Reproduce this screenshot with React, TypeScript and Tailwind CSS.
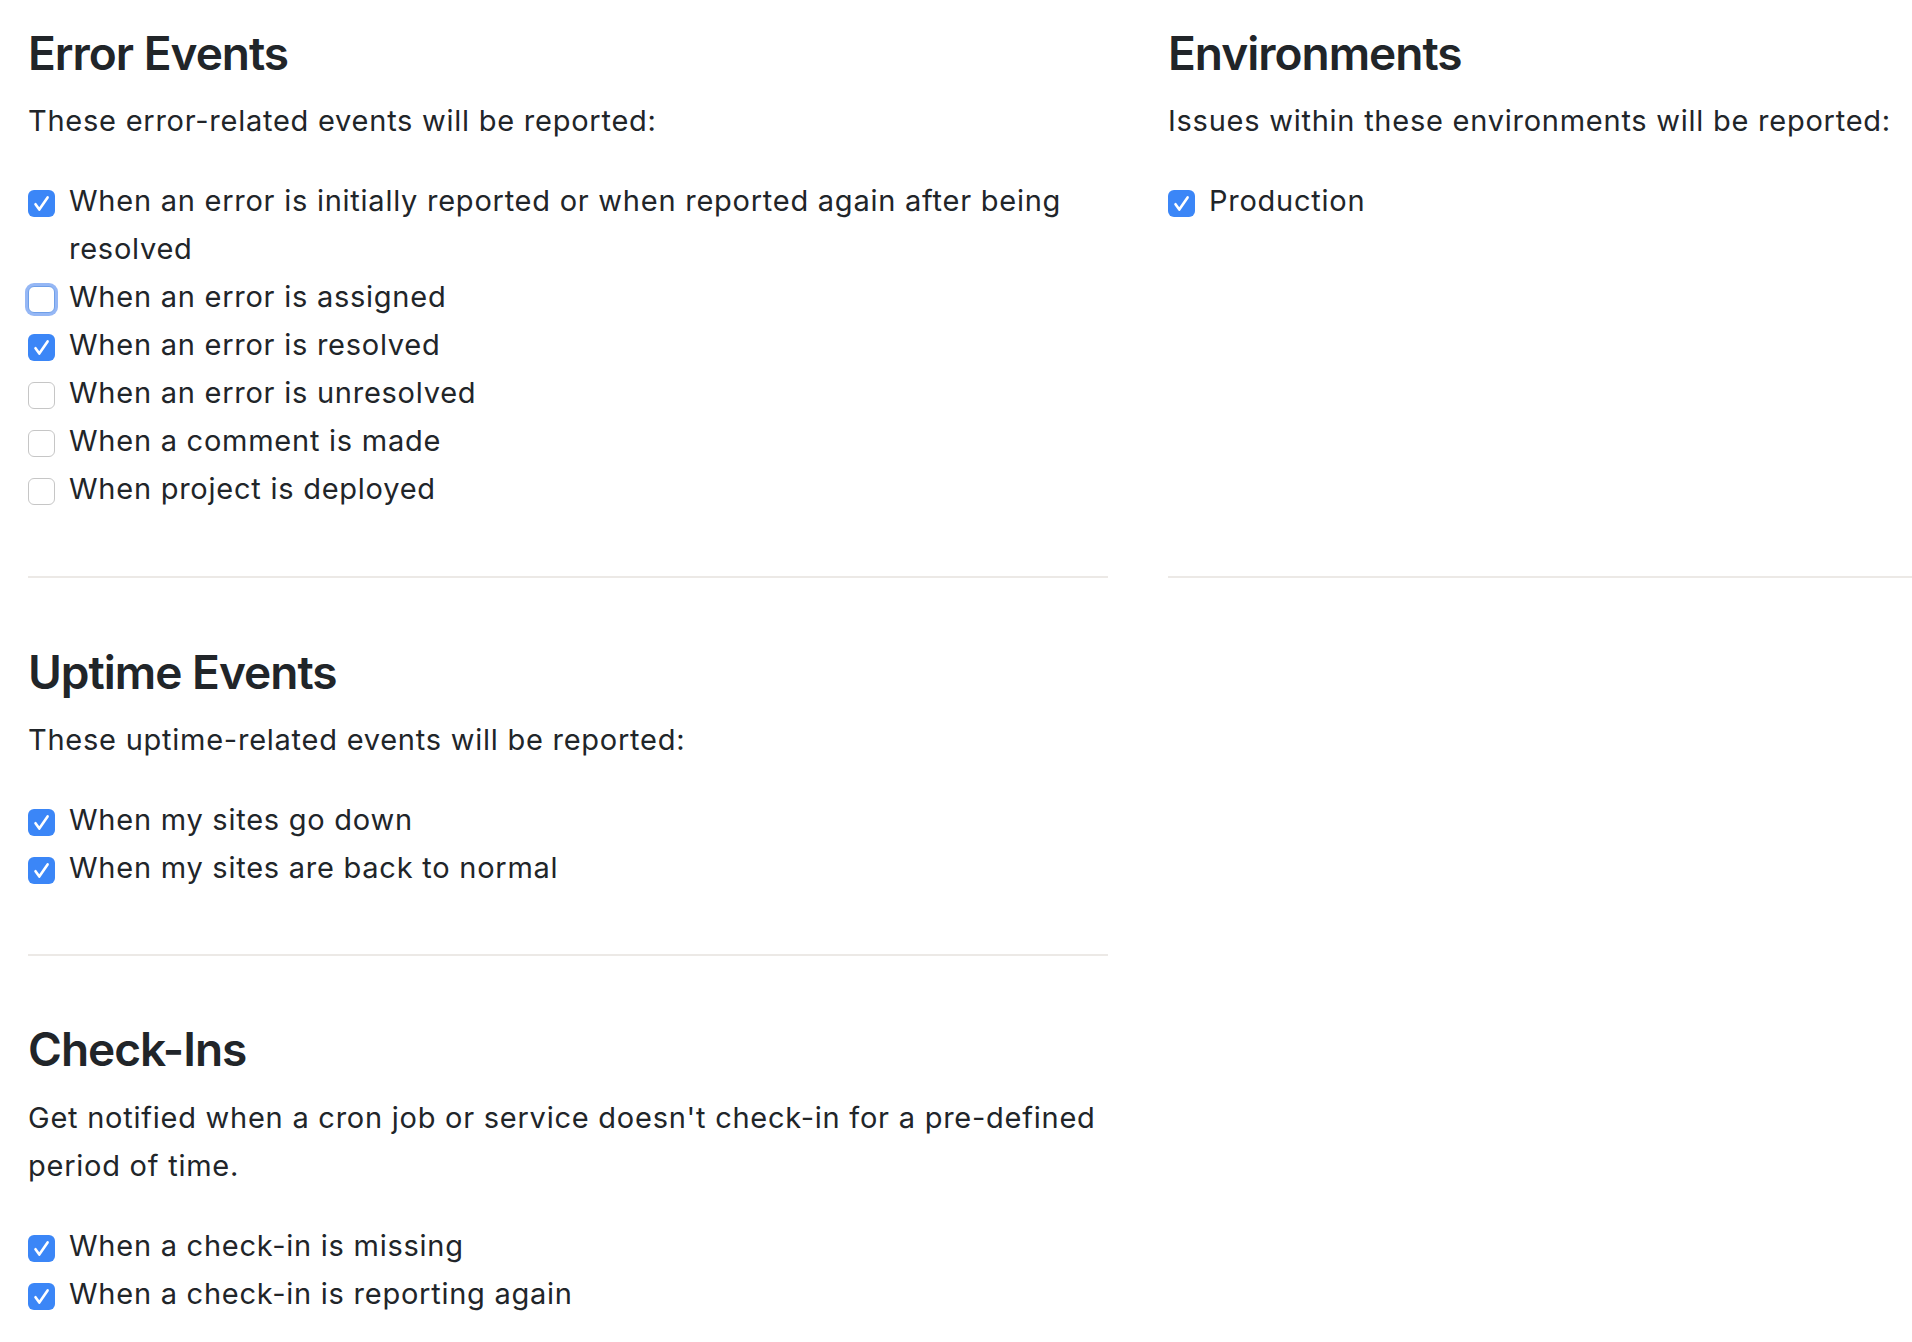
import React from "react";

type Item = { label: React.ReactNode; checked: boolean; focused?: boolean };

function Box({ checked, focused }: { checked: boolean; focused?: boolean }) {
  if (checked) {
    return (
      <span className="mt-[13px] flex h-[27px] w-[27px] shrink-0 items-center justify-center rounded-[6px] bg-[#3b86f7]">
        <svg width="27" height="27" viewBox="0 0 27 27" fill="none">
          <path d="M7.5 14.2 L11.3 19.6 L19.6 7.4" stroke="#ffffff" strokeWidth="2.6" strokeLinecap="round" strokeLinejoin="round" />
        </svg>
      </span>
    );
  }
  if (focused) {
    return (
      <span className="mt-[13px] block h-[27px] w-[27px] shrink-0 rounded-[6px] border border-[#6f9fe8] bg-white shadow-[0_0_0_3px_rgba(92,145,240,0.65)]" />
    );
  }
  return <span className="mt-[13px] block h-[27px] w-[27px] shrink-0 rounded-[6px] border border-[#c6c6c6] bg-white" />;
}

function CheckList({ items }: { items: Item[] }) {
  return (
    <div className="mt-[32px] flex flex-col">
      {items.map((it, i) => (
        <label key={i} className="flex items-start gap-[14px]">
          <Box checked={it.checked} focused={it.focused} />
          <span className="leading-[48px]">{it.label}</span>
        </label>
      ))}
    </div>
  );
}

function Heading({ children }: { children: React.ReactNode }) {
  return (
    <h3 className="text-[46px] leading-[58px] font-semibold tracking-[-1px] text-[#212529]">{children}</h3>
  );
}

function Section({
  title,
  desc,
  items,
  first,
  pb = "pb-[63px]",
}: {
  title: string;
  desc: React.ReactNode;
  items: Item[];
  first?: boolean;
  pb?: string;
}) {
  return (
    <div className={`${first ? "pt-[24px]" : "pt-[65px]"} ${pb} border-b-2 border-[#ece9e6]`}>
      <Heading>{title}</Heading>
      <p className="mt-[15px] leading-[48px]">{desc}</p>
      <CheckList items={items} />
    </div>
  );
}

export default function App() {
  return (
    <div
      className="min-h-screen bg-white text-[29px] tracking-[0.75px] text-[#212529] overflow-hidden"
      style={{ fontFamily: "Inter, 'Noto Sans', sans-serif" }}
    >
      <div className="grid grid-cols-[1080px_1fr] gap-x-[60px] pl-[28px]">
        <Section
          first
          title="Error Events"
          desc="These error-related events will be reported:"
          items={[
            {
              label: (
                <>
                  When an error is initially reported or when reported again after being
                  <br />
                  resolved
                </>
              ),
              checked: true,
            },
            { label: "When an error is assigned", checked: false, focused: true },
            { label: "When an error is resolved", checked: true },
            { label: "When an error is unresolved", checked: false },
            { label: "When a comment is made", checked: false },
            { label: "When project is deployed", checked: false },
          ]}
        />
        <div className="pt-[24px] pb-[63px] border-b-2 border-[#ece9e6] whitespace-nowrap">
          <Heading>Environments</Heading>
          <p className="mt-[15px] leading-[48px]">Issues within these environments will be reported:</p>
          <CheckList items={[{ label: "Production", checked: true }]} />
        </div>
        <Section
          title="Uptime Events"
          pb="pb-[62px]"
          desc="These uptime-related events will be reported:"
          items={[
            { label: "When my sites go down", checked: true },
            { label: "When my sites are back to normal", checked: true },
          ]}
        />
        <div />
        <div className="pt-[64px] pb-[40px]">
          <Heading>Check-Ins</Heading>
          <p className="mt-[16px] leading-[48px]">
            Get notified when a cron job or service doesn't check-in for a pre-defined
            <br />
            period of time.
          </p>
          <CheckList
            items={[
              { label: "When a check-in is missing", checked: true },
              { label: "When a check-in is reporting again", checked: true },
            ]}
          />
        </div>
        <div />
      </div>
    </div>
  );
}
